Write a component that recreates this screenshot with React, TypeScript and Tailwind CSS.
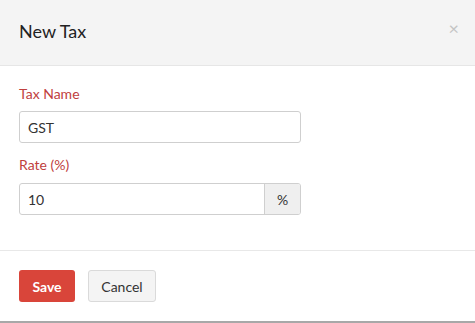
export default function App() {
  return (
    <div
      className="w-[475px] h-[323px] bg-white flex flex-col border-b-2 border-[#a8a8a8] overflow-hidden"
      style={{ fontFamily: 'Lato, "Open Sans", sans-serif' }}
    >
      {/* header */}
      <div className="h-[66px] shrink-0 bg-[#f4f4f4] border-b border-[#e6e6e6] flex items-center justify-between pl-[19px] pr-[16px]">
        <h1 className="text-[18px] text-[#222] font-normal -mt-[3px]">New Tax</h1>
        <button className="text-[#c4c4c4] text-[18px] leading-none -mt-[10px]">×</button>
      </div>

      {/* body */}
      <div className="h-[185px] shrink-0 px-[19px] pt-[18px] border-b border-[#e8e8e8]">
        <label className="block text-[14px] text-[#c0403d] leading-[20px]">Tax Name</label>
        <input
          defaultValue="GST"
          className="mt-[7px] w-[282px] h-[32px] border border-[#cfcfcf] rounded-[3px] px-[8px] text-[14px] text-[#333] outline-none"
        />
        <label className="block mt-[12px] text-[14px] text-[#c0403d] leading-[20px]">Rate (%)</label>
        <div className="mt-[8px] flex w-[282px] h-[32px] border border-[#cfcfcf] rounded-[3px] overflow-hidden">
          <input defaultValue="10" className="flex-1 min-w-0 px-[8px] text-[14px] text-[#333] outline-none" />
          <span className="w-[36px] bg-[#efefef] border-l border-[#cfcfcf] flex items-center justify-center text-[14px] text-[#333]">%</span>
        </div>
      </div>

      {/* footer */}
      <div className="flex gap-[13px] px-[19px] pt-[19px]">
        <button className="h-[32px] w-[56px] rounded-[3px] bg-[#d9453a] text-white text-[14px] font-bold">Save</button>
        <button className="h-[32px] w-[68px] rounded-[3px] bg-[#f4f4f4] border border-[#dadada] text-[#333] text-[14px]">Cancel</button>
      </div>
    </div>
  );
}
